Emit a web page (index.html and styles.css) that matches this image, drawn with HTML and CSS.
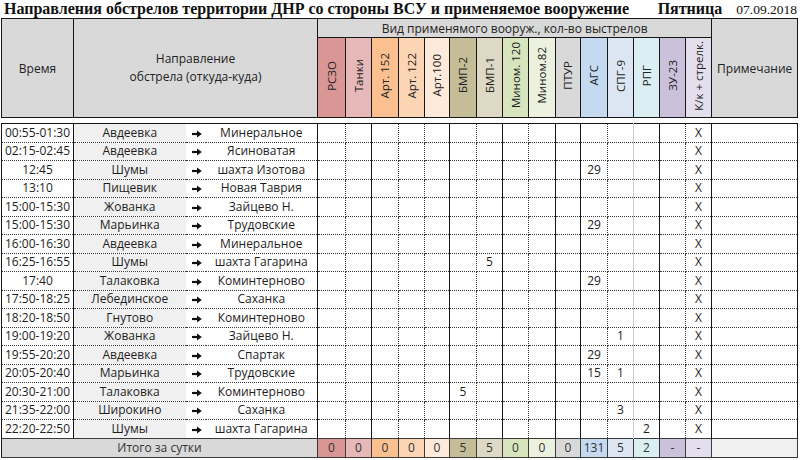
FILE: index.html
```html
<!DOCTYPE html>
<html lang="ru">
<head>
<meta charset="utf-8">
<title>Направления обстрелов</title>
<link rel="stylesheet" href="styles.css">
</head>
<body>
<div class="page">
  <div class="titlebar">
    <h1 class="title">Направления обстрелов территории ДНР со стороны ВСУ и применяемое вооружение</h1>
    <span class="day">Пятница</span>
    <span class="date">07.09.2018</span>
  </div>

  <table class="head">
    <colgroup>
      <col class="w-time"><col class="w-side"><col class="w-arrow"><col class="w-side">
      <col class="w28"><col class="w26"><col class="w27"><col class="w26"><col class="w25">
      <col class="w27"><col class="w26"><col class="w26"><col class="w27"><col class="w25">
      <col class="w27"><col class="w26"><col class="w26"><col class="w26"><col class="w26">
      <col class="w-note">
    </colgroup>
    <tr class="r1">
      <th rowspan="2" class="gray">Время</th>
      <th rowspan="2" colspan="3" class="gray dir">Направление<br>обстрела (откуда-куда)</th>
      <th colspan="15" class="gray">Вид применямого вооруж., кол-во выстрелов</th>
      <th rowspan="2" class="gray">Примечание</th>
    </tr>
    <tr class="r2">
      <th class="c-rszo vert"><span>РСЗО</span></th>
      <th class="c-tank vert"><span>Танки</span></th>
      <th class="c-a152 vert"><span>Арт. 152</span></th>
      <th class="c-a122 vert"><span>Арт. 122</span></th>
      <th class="c-a100 vert"><span>Арт.100</span></th>
      <th class="c-bmp2 vert"><span>БМП-2</span></th>
      <th class="c-bmp1 vert"><span>БМП-1</span></th>
      <th class="c-m120 vert"><span>Мином. 120</span></th>
      <th class="c-m82 vert"><span>Мином.82</span></th>
      <th class="c-ptur vert"><span>ПТУР</span></th>
      <th class="c-ags vert"><span>АГС</span></th>
      <th class="c-spg vert"><span>СПГ-9</span></th>
      <th class="c-rpg vert"><span>РПГ</span></th>
      <th class="c-zu vert"><span>ЗУ-23</span></th>
      <th class="c-kk vert"><span>К/к + стрелк.</span></th>
    </tr>
  </table>

  <table class="grid">
    <colgroup>
      <col class="w-time"><col class="w-side"><col class="w-arrow"><col class="w-side">
      <col class="w28"><col class="w26"><col class="w27"><col class="w26"><col class="w25">
      <col class="w27"><col class="w26"><col class="w26"><col class="w27"><col class="w25">
      <col class="w27"><col class="w26"><col class="w26"><col class="w26"><col class="w26">
      <col class="w-note">
    </colgroup>
    <tbody>
      <tr><td>00:55-01:30</td><td class="from">Авдеевка</td><td><svg class="arr" viewBox="0 0 10 8"><path d="M0 4h6"/><path class="hd" d="M5 .6 9.8 4 5 7.4z"/></svg></td><td>Минеральное</td><td></td><td></td><td></td><td></td><td></td><td></td><td></td><td></td><td></td><td></td><td></td><td></td><td></td><td></td><td>X</td><td></td></tr>
      <tr><td>02:15-02:45</td><td class="from">Авдеевка</td><td><svg class="arr" viewBox="0 0 10 8"><path d="M0 4h6"/><path class="hd" d="M5 .6 9.8 4 5 7.4z"/></svg></td><td>Ясиноватая</td><td></td><td></td><td></td><td></td><td></td><td></td><td></td><td></td><td></td><td></td><td></td><td></td><td></td><td></td><td>X</td><td></td></tr>
      <tr><td>12:45</td><td class="from">Шумы</td><td><svg class="arr" viewBox="0 0 10 8"><path d="M0 4h6"/><path class="hd" d="M5 .6 9.8 4 5 7.4z"/></svg></td><td>шахта Изотова</td><td></td><td></td><td></td><td></td><td></td><td></td><td></td><td></td><td></td><td></td><td>29</td><td></td><td></td><td></td><td>X</td><td></td></tr>
      <tr><td>13:10</td><td class="from">Пищевик</td><td><svg class="arr" viewBox="0 0 10 8"><path d="M0 4h6"/><path class="hd" d="M5 .6 9.8 4 5 7.4z"/></svg></td><td>Новая Таврия</td><td></td><td></td><td></td><td></td><td></td><td></td><td></td><td></td><td></td><td></td><td></td><td></td><td></td><td></td><td>X</td><td></td></tr>
      <tr><td>15:00-15:30</td><td class="from">Жованка</td><td><svg class="arr" viewBox="0 0 10 8"><path d="M0 4h6"/><path class="hd" d="M5 .6 9.8 4 5 7.4z"/></svg></td><td>Зайцево Н.</td><td></td><td></td><td></td><td></td><td></td><td></td><td></td><td></td><td></td><td></td><td></td><td></td><td></td><td></td><td>X</td><td></td></tr>
      <tr><td>15:00-15:30</td><td class="from">Марьинка</td><td><svg class="arr" viewBox="0 0 10 8"><path d="M0 4h6"/><path class="hd" d="M5 .6 9.8 4 5 7.4z"/></svg></td><td>Трудовские</td><td></td><td></td><td></td><td></td><td></td><td></td><td></td><td></td><td></td><td></td><td>29</td><td></td><td></td><td></td><td>X</td><td></td></tr>
      <tr><td>16:00-16:30</td><td class="from">Авдеевка</td><td><svg class="arr" viewBox="0 0 10 8"><path d="M0 4h6"/><path class="hd" d="M5 .6 9.8 4 5 7.4z"/></svg></td><td>Минеральное</td><td></td><td></td><td></td><td></td><td></td><td></td><td></td><td></td><td></td><td></td><td></td><td></td><td></td><td></td><td>X</td><td></td></tr>
      <tr><td>16:25-16:55</td><td class="from">Шумы</td><td><svg class="arr" viewBox="0 0 10 8"><path d="M0 4h6"/><path class="hd" d="M5 .6 9.8 4 5 7.4z"/></svg></td><td>шахта Гагарина</td><td></td><td></td><td></td><td></td><td></td><td></td><td>5</td><td></td><td></td><td></td><td></td><td></td><td></td><td></td><td>X</td><td></td></tr>
      <tr><td>17:40</td><td class="from">Талаковка</td><td><svg class="arr" viewBox="0 0 10 8"><path d="M0 4h6"/><path class="hd" d="M5 .6 9.8 4 5 7.4z"/></svg></td><td>Коминтерново</td><td></td><td></td><td></td><td></td><td></td><td></td><td></td><td></td><td></td><td></td><td>29</td><td></td><td></td><td></td><td>X</td><td></td></tr>
      <tr><td>17:50-18:25</td><td class="from">Лебединское</td><td><svg class="arr" viewBox="0 0 10 8"><path d="M0 4h6"/><path class="hd" d="M5 .6 9.8 4 5 7.4z"/></svg></td><td>Саханка</td><td></td><td></td><td></td><td></td><td></td><td></td><td></td><td></td><td></td><td></td><td></td><td></td><td></td><td></td><td>X</td><td></td></tr>
      <tr><td>18:20-18:50</td><td class="from">Гнутово</td><td><svg class="arr" viewBox="0 0 10 8"><path d="M0 4h6"/><path class="hd" d="M5 .6 9.8 4 5 7.4z"/></svg></td><td>Коминтерново</td><td></td><td></td><td></td><td></td><td></td><td></td><td></td><td></td><td></td><td></td><td></td><td></td><td></td><td></td><td>X</td><td></td></tr>
      <tr><td>19:00-19:20</td><td class="from">Жованка</td><td><svg class="arr" viewBox="0 0 10 8"><path d="M0 4h6"/><path class="hd" d="M5 .6 9.8 4 5 7.4z"/></svg></td><td>Зайцево Н.</td><td></td><td></td><td></td><td></td><td></td><td></td><td></td><td></td><td></td><td></td><td></td><td>1</td><td></td><td></td><td>X</td><td></td></tr>
      <tr><td>19:55-20:20</td><td class="from">Авдеевка</td><td><svg class="arr" viewBox="0 0 10 8"><path d="M0 4h6"/><path class="hd" d="M5 .6 9.8 4 5 7.4z"/></svg></td><td>Спартак</td><td></td><td></td><td></td><td></td><td></td><td></td><td></td><td></td><td></td><td></td><td>29</td><td></td><td></td><td></td><td>X</td><td></td></tr>
      <tr><td>20:05-20:40</td><td class="from">Марьинка</td><td><svg class="arr" viewBox="0 0 10 8"><path d="M0 4h6"/><path class="hd" d="M5 .6 9.8 4 5 7.4z"/></svg></td><td>Трудовские</td><td></td><td></td><td></td><td></td><td></td><td></td><td></td><td></td><td></td><td></td><td>15</td><td>1</td><td></td><td></td><td>X</td><td></td></tr>
      <tr><td>20:30-21:00</td><td class="from">Талаковка</td><td><svg class="arr" viewBox="0 0 10 8"><path d="M0 4h6"/><path class="hd" d="M5 .6 9.8 4 5 7.4z"/></svg></td><td>Коминтерново</td><td></td><td></td><td></td><td></td><td></td><td>5</td><td></td><td></td><td></td><td></td><td></td><td></td><td></td><td></td><td>X</td><td></td></tr>
      <tr><td>21:35-22:00</td><td class="from">Широкино</td><td><svg class="arr" viewBox="0 0 10 8"><path d="M0 4h6"/><path class="hd" d="M5 .6 9.8 4 5 7.4z"/></svg></td><td>Саханка</td><td></td><td></td><td></td><td></td><td></td><td></td><td></td><td></td><td></td><td></td><td></td><td>3</td><td></td><td></td><td>X</td><td></td></tr>
      <tr><td>22:20-22:50</td><td class="from">Шумы</td><td><svg class="arr" viewBox="0 0 10 8"><path d="M0 4h6"/><path class="hd" d="M5 .6 9.8 4 5 7.4z"/></svg></td><td>шахта Гагарина</td><td></td><td></td><td></td><td></td><td></td><td></td><td></td><td></td><td></td><td></td><td></td><td></td><td>2</td><td></td><td>X</td><td></td></tr>
    </tbody>
    <tfoot>
      <tr class="total">
        <td colspan="4" class="gray">Итого за сутки</td>
        <td class="c-rszo">0</td><td class="c-tank">0</td><td class="c-a152">0</td><td class="c-a122">0</td><td class="c-a100">0</td>
        <td class="c-bmp2">5</td><td class="c-bmp1">5</td><td class="c-m120">0</td><td class="c-m82">0</td><td class="c-ptur">0</td>
        <td class="c-ags">131</td><td class="c-spg">5</td><td class="c-rpg">2</td><td class="c-zu">-</td><td class="c-kk">-</td>
        <td class="note-total"></td>
      </tr>
    </tfoot>
  </table>
</div>
</body>
</html>
```

FILE: styles.css
```css
* { box-sizing: border-box; }

body {
  margin: 0;
  background: #fff;
  color: #1e1e1e;
  font-family: "Open Sans", "DejaVu Sans", sans-serif;
}

.page {
  width: 800px;
  height: 460px;
  padding-left: 1px;
  overflow: hidden;
}

/* title line */
.titlebar {
  display: flex;
  align-items: baseline;
  height: 18px;
  padding-left: 3px;
  font-family: "Liberation Serif", "DejaVu Serif", serif;
  color: #111;
}
.title {
  margin: 0;
  font-size: 16px;
  font-weight: bold;
  line-height: 18px;
  white-space: nowrap;
}
.day {
  margin-left: auto;
  font-size: 16px;
  font-weight: bold;
}
.date {
  margin-left: 14px;
  margin-right: 3px;
  font-size: 13.5px;
}

/* tables */
table {
  border-collapse: collapse;
  table-layout: fixed;
  width: 796px;
}
.w-time { width: 72px; }
.w-side { width: 112px; }
.w-arrow { width: 20px; }
.w25 { width: 25px; }
.w26 { width: 26px; }
.w27 { width: 27px; }
.w28 { width: 28px; }
.w-note { width: 86px; }

.head th {
  border: 1px solid #161616;
  padding: 0;
  font-weight: normal;
  font-size: 12px;
  color: #222;
  text-align: center;
  vertical-align: middle;
  overflow: hidden;
}
.head .r1 { height: 19px; }
.head .r2 { height: 80px; }
.head .dir { line-height: 18px; }

.vert span {
  display: inline-block;
  writing-mode: vertical-rl;
  transform: rotate(180deg);
  white-space: nowrap;
  font-size: 11.5px;
  line-height: 14px;
}

.gray { background: #d9d9d9; }

/* weapon colours */
.c-rszo { background: #d99694; }
.c-tank { background: #e6b9b8; }
.c-a152 { background: #fac090; }
.c-a122 { background: #fcd5b4; }
.c-a100 { background: #fdeadb; }
.c-bmp2 { background: #c4bd97; }
.c-bmp1 { background: #ddd9c4; }
.c-m120 { background: #d7e4bd; }
.c-m82  { background: #ebf1de; }
.c-ptur { background: #d9d9d9; }
.c-ags  { background: #c5d9f1; }
.c-spg  { background: #dce6f2; }
.c-rpg  { background: #daeef3; }
.c-zu   { background: #ccc1da; }
.c-kk   { background: #e4dfec; }

/* body grid */
.grid { margin-top: 5px; }
.grid tbody tr { height: 18.5px; }
.grid td {
  padding: 0;
  border: 1px dotted #3a3a3a;
  font-size: 12px;
  line-height: 16px;
  text-align: center;
  vertical-align: middle;
  white-space: nowrap;
  overflow: hidden;
}
.grid tbody tr:first-child td { border-top: 1px solid #161616; }

.grid tbody td:nth-child(1),
.grid tbody td:nth-child(2),
.grid tbody td:nth-child(5),
.grid tbody td:nth-child(7),
.grid tbody td:nth-child(10),
.grid tbody td:nth-child(12),
.grid tbody td:nth-child(14),
.grid tbody td:nth-child(15),
.grid tbody td:nth-child(18),
.grid tbody td:nth-child(20) {
  border-left: 1px solid #161616;
}
.grid tbody td:nth-child(20) { border-right: 1px solid #161616; }
.grid tbody td:nth-child(2) { border-right: none; }
.grid tbody td:nth-child(3) { border-left: none; border-right: none; }
.grid tbody td:nth-child(4) { border-left: none; }
.grid tbody td:nth-child(16) { border-right: 1px solid #cfcfcf; }

.grid .from { background: #f0f0f0; }

.arr {
  display: inline-block;
  width: 10px;
  height: 8px;
  vertical-align: middle;
  margin-left: 2px;
}
.arr path { stroke: #111; stroke-width: 2.2; fill: none; }
.arr .hd { fill: #111; stroke: none; }

/* totals */
.grid .total { height: 19.5px; }
.grid .total td {
  border: 1px solid #3a3a3a;
  color: #333;
}
.grid .total td.gray { border-left: 1px solid #161616; }
.grid .note-total {
  background: #f0f0f0;
  border-right: 1px solid #161616;
}
```
